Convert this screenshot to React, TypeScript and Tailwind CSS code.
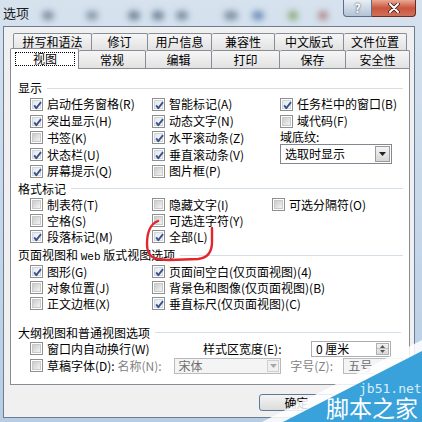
import React from "react";

function Box({ checked }: { checked?: boolean }) {
  return (
    <span className="relative flex h-[13px] w-[13px] shrink-0 border border-[#8e8f8f] bg-white p-[1px]">
      <span
        className={
          checked
            ? "flex-1 border border-[#cfd6de] bg-linear-to-br from-[#dfe6ee] to-[#ffffff]"
            : "flex-1 border border-[#c9c9c9] bg-linear-to-br from-[#cbcbcb] to-[#f3f3f3]"
        }
      />
      {checked && (
        <svg className="absolute left-[1px] top-[1px]" width="11" height="11" viewBox="0 0 11 11">
          <path d="M2.2 5.4 L4.3 8.2 L9 2.2" stroke="#3c5189" strokeWidth="1.9" fill="none" strokeLinejoin="round" />
        </svg>
      )}
    </span>
  );
}

function Item({ checked, label, h = "h-[16.75px]" }: { checked?: boolean; label: string; h?: string }) {
  return (
    <div className={`flex ${h} items-center gap-[4px] whitespace-nowrap`}>
      <Box checked={checked} />
      <span className="leading-[14px]">{label}</span>
    </div>
  );
}

function Header({ children, className = "" }: { children: React.ReactNode; className?: string }) {
  return (
    <div className={`flex h-[16px] items-center ${className}`}>
      <span className="whitespace-nowrap leading-[14px]">{children}</span>
      <span className="ml-[5px] h-px flex-1 bg-[#d5dfe5]" />
    </div>
  );
}

function Arrow({ color = "#222" }: { color?: string }) {
  return (
    <svg width="7" height="4" viewBox="0 0 7 4">
      <path d="M0 0 L7 0 L3.5 4 Z" fill={color} />
    </svg>
  );
}

function Tab({ label, w, first }: { label: string; w: string; first?: boolean }) {
  return (
    <div
      className={`flex h-full ${w} items-center justify-center rounded-t-[2px] border-t border-r border-[#898c95] ${
        first ? "border-l" : ""
      } bg-linear-to-b from-[#f6f6f6] to-[#e2e2e2] leading-[14px]`}
    >
      {label}
    </div>
  );
}

export default function App() {
  return (
    <div className="relative h-[422px] w-[422px] overflow-hidden bg-linear-to-b from-[#d6e2ee] to-[#b7cde4] font-['Noto_Sans_CJK_SC','Noto_Sans',sans-serif] text-[12px] text-black">
      {/* title bar */}
      <div className="relative flex h-[26px] items-start">
        <div className="pointer-events-none absolute inset-0 overflow-hidden">
          <span className="absolute left-[42px] top-[11px] h-[9px] w-[12px] rounded-full bg-[#7d8ea2] blur-[3px]" />
          <span className="absolute left-[86px] top-[11px] h-[9px] w-[12px] rounded-full bg-[#8797a8] blur-[3px]" />
          <span className="absolute left-[128px] top-[11px] h-[9px] w-[12px] rounded-full bg-[#6f8297] blur-[3px]" />
          <span className="absolute left-[152px] top-[11px] h-[9px] w-[12px] rounded-full bg-[#6f8297] blur-[3px]" />
          <span className="absolute left-[176px] top-[11px] h-[9px] w-[12px] rounded-full bg-[#7a8ba0] blur-[3px]" />
          <span className="absolute left-[224px] top-[11px] h-[9px] w-[14px] rounded-full bg-[#7f90a4] blur-[3px]" />
          <span className="absolute left-[252px] top-[11px] h-[9px] w-[12px] rounded-full bg-[#6c8fb7] blur-[3px]" />
          <span className="absolute left-[288px] top-[11px] h-[9px] w-[10px] rounded-full bg-[#8aa87a] blur-[3px]" />
          <span className="absolute left-[318px] top-[11px] h-[9px] w-[10px] rounded-full bg-[#b08a8a] blur-[3px]" />
        </div>
        <span className="relative pl-[3px] pt-[5px] text-[13px] leading-[16px] text-[#1b1b1b]">选项</span>
        <div className="absolute right-[6px] top-0 flex">
          <div className="flex h-[17px] w-[29px] items-center justify-center rounded-bl-[4px] border border-t-0 border-[#5d6f86] bg-linear-to-b from-[#e8eef5] to-[#b3c3d5] text-[12px] font-bold leading-none text-white [text-shadow:0_0_2px_#223]">
            ?
          </div>
          <div className="flex h-[17px] w-[44px] items-center justify-center rounded-br-[4px] border border-l-0 border-t-0 border-[#6b2a1e] bg-linear-to-b from-[#e9a896] via-[#c9553c] to-[#d0705a]">
            <svg width="12" height="10" viewBox="0 0 12 10">
              <path d="M2 1 L10 9 M10 1 L2 9" stroke="#3a1d17" strokeWidth="3.6" strokeLinecap="round" />
              <path d="M2 1 L10 9 M10 1 L2 9" stroke="#ffffff" strokeWidth="2" strokeLinecap="round" />
            </svg>
          </div>
        </div>
      </div>

      {/* body */}
      <div className="flex h-[392px]">
        <div className="w-[3px]" />
        <div className="flex w-[412px] flex-col border border-[#6b7d93] bg-[#f0f0f0]">
          {/* tabs row 1 */}
          <div className="ml-[9px] mt-[6px] flex h-[17px]">
            <Tab label="拼写和语法" w="w-[79px]" first />
            <Tab label="修订" w="w-[56px]" />
            <Tab label="用户信息" w="w-[64px]" />
            <Tab label="兼容性" w="w-[63px]" />
            <Tab label="中文版式" w="w-[69px]" />
            <Tab label="文件位置" w="w-[63px]" />
          </div>
          {/* tabs row 2 */}
          <div className="-mt-[2px] ml-[6px] flex h-[20px] items-end">
            <div className="relative z-10 -mb-[1px] flex h-[21px] w-[69px] rounded-t-[2px] border border-b-0 border-[#898c95] bg-white pb-[3px] pl-[4px] pr-[3px] pt-[3px]">
              <div className="flex flex-1 items-center justify-center border border-dotted border-black leading-[14px]">
                视图
              </div>
            </div>
            <div className="flex h-[18px]">
              <Tab label="常规" w="w-[67px]" />
              <Tab label="编辑" w="w-[66px]" />
              <Tab label="打印" w="w-[68px]" />
              <Tab label="保存" w="w-[66px]" />
              <Tab label="安全性" w="w-[64px]" />
            </div>
          </div>

          {/* panel */}
          <div className="ml-[6px] flex h-[317px] w-[400px] flex-col border border-[#898c95] bg-white pl-[7px] pr-[6px] pt-[11px]">
            <Header>显示</Header>
            <div className="ml-[12px] flex">
              <div className="flex w-[122px] flex-col">
                <Item checked label="启动任务窗格(R)" />
                <Item checked label="突出显示(H)" />
                <Item label="书签(K)" />
                <Item checked label="状态栏(U)" />
                <Item checked label="屏幕提示(Q)" />
              </div>
              <div className="flex w-[128px] flex-col">
                <Item checked label="智能标记(A)" />
                <Item checked label="动态文字(N)" />
                <Item checked label="水平滚动条(Z)" />
                <Item checked label="垂直滚动条(V)" />
                <Item label="图片框(P)" />
              </div>
              <div className="flex flex-col">
                <Item checked label="任务栏中的窗口(B)" />
                <Item label="域代码(F)" />
                <div className="flex h-[13px] items-center leading-[13px]">域底纹:</div>
                <div className="mt-[1px] flex h-[20px] w-[112px] border border-[#828790] bg-white">
                  <span className="flex flex-1 items-center pl-[4px] leading-[14px]">选取时显示</span>
                  <span className="m-[1px] flex w-[15px] items-center justify-center border border-[#9a9a9a] bg-linear-to-b from-[#f4f4f4] to-[#d6d6d6]">
                    <Arrow />
                  </span>
                </div>
              </div>
            </div>

            <Header className="mt-[1px]">格式标记</Header>
            <div className="ml-[12px] flex">
              <div className="flex w-[122px] flex-col">
                <Item label="制表符(T)" h="h-[16px]" />
                <Item label="空格(S)" h="h-[16px]" />
                <Item checked label="段落标记(M)" h="h-[16px]" />
              </div>
              <div className="flex w-[120px] flex-col">
                <Item label="隐藏文字(I)" h="h-[16px]" />
                <Item label="可选连字符(Y)" h="h-[16px]" />
                <Item checked label="全部(L)" h="h-[16px]" />
              </div>
              <div className="flex flex-col">
                <Item label="可选分隔符(O)" h="h-[16px]" />
              </div>
            </div>

            <Header className="mt-[3px]">
              页面视图和 <span className="font-['Liberation_Mono',monospace] text-[11px]">Web</span> 版式视图选项
            </Header>
            <div className="ml-[12px] flex">
              <div className="flex w-[122px] flex-col">
                <Item checked label="图形(G)" h="h-[16px]" />
                <Item label="对象位置(J)" h="h-[16px]" />
                <Item label="正文边框(X)" h="h-[16px]" />
              </div>
              <div className="flex flex-col">
                <Item checked label="页面间空白(仅页面视图)(4)" h="h-[16px]" />
                <Item label="背景色和图像(仅页面视图)(B)" h="h-[16px]" />
                <Item checked label="垂直标尺(仅页面视图)(C)" h="h-[16px]" />
              </div>
            </div>

            <Header className="mt-[13px] pr-[2px]">大纲视图和普通视图选项</Header>
            <div className="ml-[12px] flex h-[16px] items-center">
              <div className="w-[173px]">
                <Item label="窗口内自动换行(W)" h="h-[16px]" />
              </div>
              <span className="w-[108px] whitespace-nowrap leading-[14px]">样式区宽度(E):</span>
              <div className="flex h-[16px] w-[80px] border border-[#abadb3] bg-white">
                <span className="flex flex-1 items-center pl-[4px] leading-[14px]">0 厘米</span>
                <span className="my-[1px] mr-[1px] flex w-[13px] flex-col border border-[#b0b0b0] bg-linear-to-b from-[#f2f2f2] to-[#d9d9d9]">
                  <span className="flex flex-1 items-center justify-center border-b border-[#c0c0c0]">
                    <svg width="5" height="3" viewBox="0 0 5 3"><path d="M0 3 L5 3 L2.5 0 Z" fill="#555" /></svg>
                  </span>
                  <span className="flex flex-1 items-center justify-center">
                    <svg width="5" height="3" viewBox="0 0 5 3"><path d="M0 0 L5 0 L2.5 3 Z" fill="#555" /></svg>
                  </span>
                </span>
              </div>
            </div>
            <div className="ml-[12px] flex h-[18px] items-center">
              <div className="flex w-[144px] items-center gap-[4px] whitespace-nowrap">
                <Box />
                <span className="leading-[14px]">
                  草稿字体(D): <span className="text-[#838383]">名称(N):</span>
                </span>
              </div>
              <div className="flex h-[16px] w-[108px] border border-[#b8bcc0] bg-[#f4f4f4]">
                <span className="flex flex-1 items-center pl-[4px] leading-[14px] text-[#6d6d6d]">宋体</span>
                <span className="m-[1px] flex w-[12px] items-center justify-center border border-[#cfcfcf] bg-[#f0f0f0]">
                  <Arrow color="#a8a8a8" />
                </span>
              </div>
              <span className="w-[62px] whitespace-nowrap pl-[9px] leading-[14px] text-[#838383]">字号(Z):</span>
              <div className="flex h-[16px] w-[60px] border border-[#b8bcc0] bg-[#f4f4f4]">
                <span className="flex flex-1 items-center pl-[4px] leading-[14px] text-[#6d6d6d]">五号</span>
              </div>
            </div>
          </div>

          {/* buttons */}
          <div className="ml-[255px] mt-[9px] flex gap-[6px]">
            <div className="flex h-[17px] w-[75px] items-center justify-center rounded-[3px] border border-[#5f7a96] bg-linear-to-b from-[#f4f4f4] to-[#dcdcdc] leading-[14px]">
              确定
            </div>
            <div className="flex h-[17px] w-[73px] items-center justify-center rounded-[3px] border border-[#707070] bg-linear-to-b from-[#f4f4f4] to-[#dcdcdc] leading-[14px]">
              取消
            </div>
          </div>
        </div>
        <div className="w-[7px]" />
      </div>

      {/* overlays: red annotation and watermark */}
      <svg className="pointer-events-none absolute left-0 top-0" width="422" height="422" viewBox="0 0 422 422">
        <path
          d="M158 221 C150 224, 147 232, 147 244 C147 256, 152 260, 170 260 L198 259 C208 258, 212 252, 212 242 L212 228"
          stroke="#e3262b"
          strokeWidth="2.4"
          fill="none"
          strokeLinecap="round"
        />
        <polygon points="422,340 422,422 262,422" fill="#ffffff" fillOpacity="0.85" />
        <polygon points="422,351 422,422 283,422" fill="#3aa2da" />
      </svg>
      <span className="pointer-events-none absolute left-[359px] top-[382px] font-['DejaVu_Sans_Mono',monospace] text-[13px] leading-[14px] text-[#d6eefa]">
        jb51.net
      </span>
      <span className="pointer-events-none absolute left-[326px] top-[395px] text-[23px] leading-[25px] text-white">
        脚本之家
      </span>
    </div>
  );
}
